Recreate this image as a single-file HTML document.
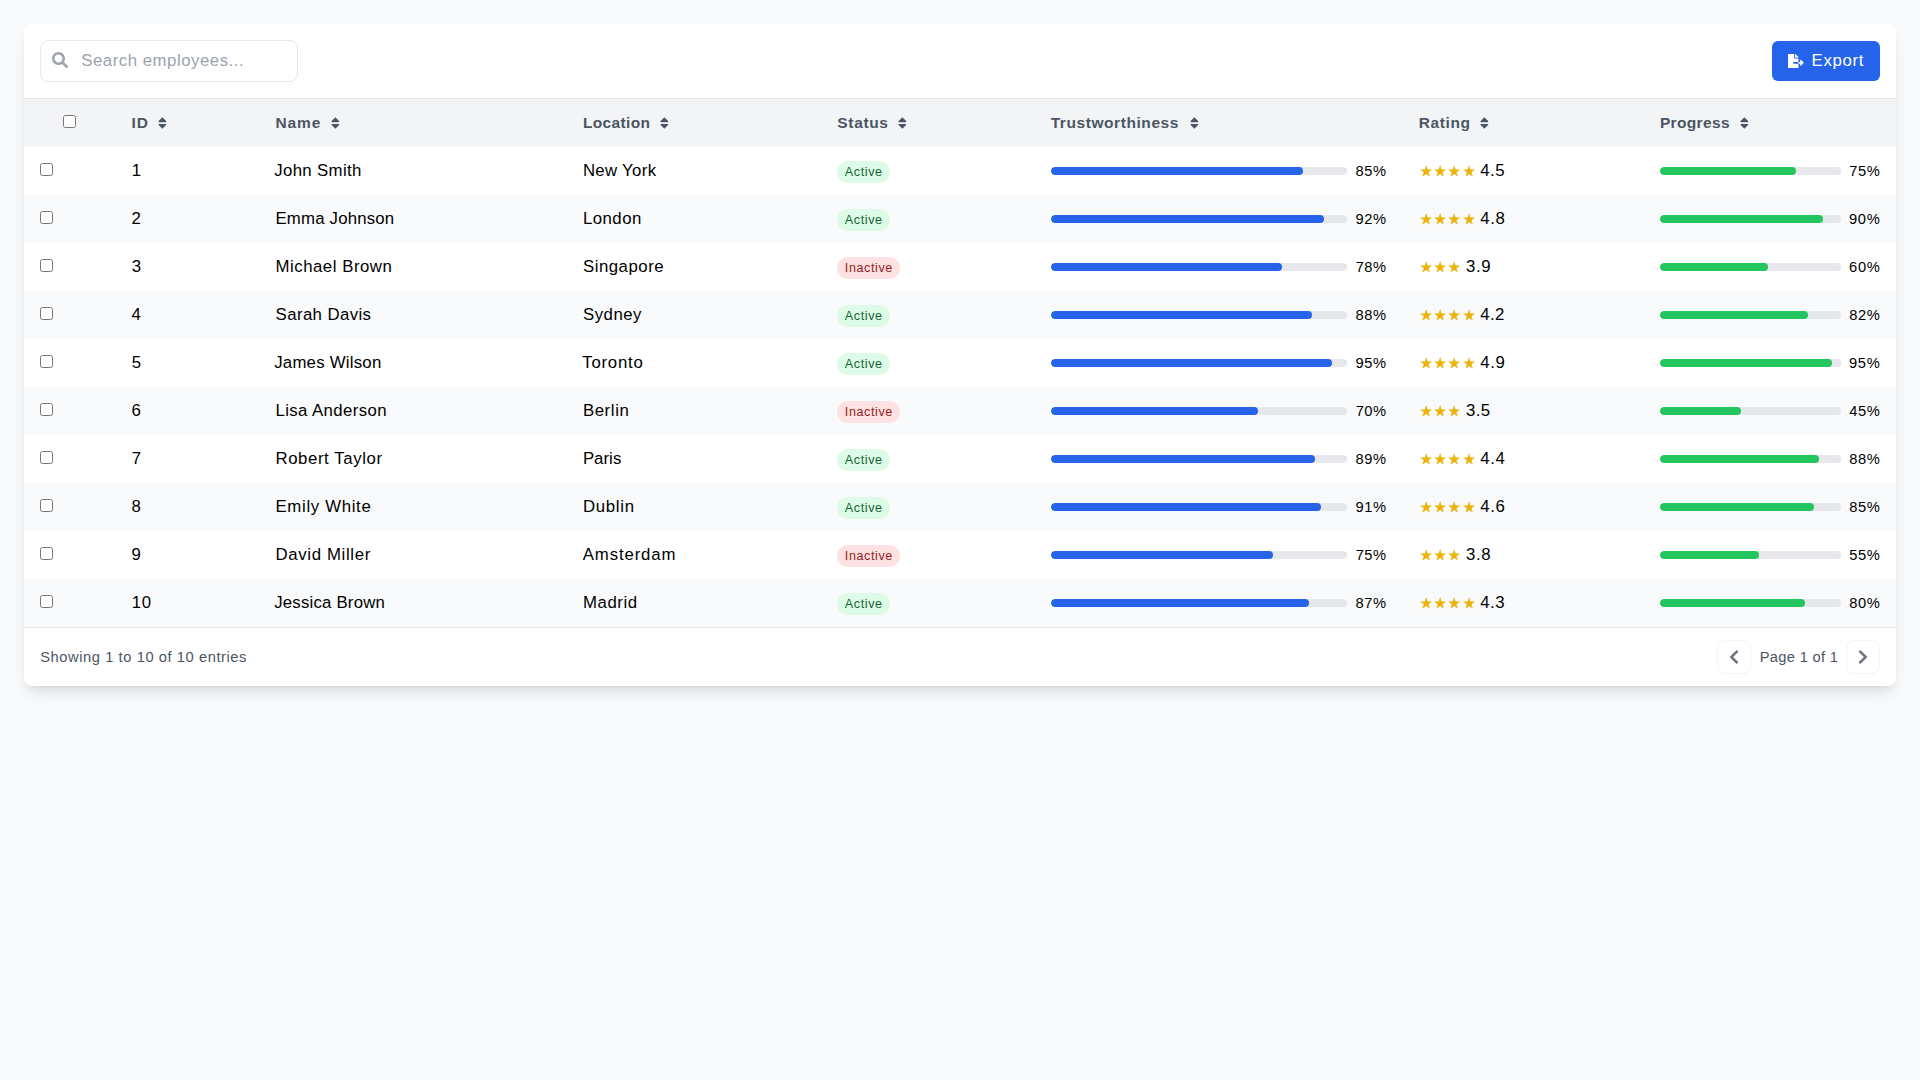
<!DOCTYPE html>
<html><head><meta charset="utf-8"><title>Employees</title><style>
*{box-sizing:border-box}
html,body{margin:0;padding:0}
body{width:1920px;height:1080px;background:#f9fafb;position:relative;overflow:hidden;font-family:"Liberation Sans",sans-serif}
.t{position:absolute;white-space:nowrap;line-height:20px}
.ic{position:absolute;overflow:visible}
.card{position:absolute;left:24px;top:24px;width:1872px;height:662px;background:#fff;border-radius:8px;box-shadow:0 10px 15px -3px rgba(0,0,0,.1),0 4px 6px -4px rgba(0,0,0,.1)}
.search{position:absolute;left:40px;top:40px;width:258px;height:42px;border:1px solid #e5e7eb;border-radius:8px;background:#fff}
.export{position:absolute;left:1772px;top:41px;width:108px;height:40px;background:#2563eb;border-radius:6px}
.hline{position:absolute;left:24px;width:1872px;height:1px;background:#e5e7eb}
.row{position:absolute;left:24px;width:1872px;height:48px}
.cb{position:absolute;margin:0;width:13px;height:13px}
.badge{position:absolute;height:22px;border-radius:11px}
.bar{position:absolute;height:8px;border-radius:4px;background:#e5e7eb;overflow:hidden}
.bar>div{height:8px;border-radius:4px}
.pbtn{position:absolute;top:640px;width:34px;height:34px;border:1px solid #f3f4f6;border-radius:8px;background:#fff}
</style></head><body>
<div class="card"></div>
<div class="search"></div>
<svg class="ic" style="left:52.20px;top:52.20px;width:16.00px;height:16.00px" viewBox="0 0 512 512"><path fill="#9ca3af" d="M505 442.7L405.3 343c-4.5-4.5-10.6-7-17-7H372c27.6-35.3 44-79.7 44-128C416 93.1 322.9 0 208 0S0 93.1 0 208s93.1 208 208 208c48.3 0 92.7-16.4 128-44v16.3c0 6.4 2.5 12.5 7 17l99.7 99.7c9.4 9.4 24.6 9.4 33.9 0l28.3-28.3c9.4-9.4 9.4-24.6.1-34zM208 336c-70.7 0-128-57.2-128-128 0-70.7 57.2-128 128-128 70.7 0 128 57.2 128 128 0 70.7-57.2 128-128 128z"/></svg>
<span class="t" style="left:81.29px;top:51.00px;font-size:16.8px;font-weight:400;letter-spacing:0.519px;color:#9ca3af;">Search employees...</span>
<div class="export"></div>
<svg class="ic" style="left:1788.00px;top:54.00px;width:15.75px;height:14.00px" viewBox="0 0 576 512"><path fill="#fff" d="M384 121.9c0-6.3-2.5-12.4-7-16.9L279.1 7c-4.5-4.5-10.6-7-17-7H256v128h128zM571 308l-95.7-96.4c-10.1-10.1-27.4-3-27.4 11.3V288h-64v64h64v65.2c0 14.3 17.3 21.4 27.4 11.3L571 332c6.6-6.6 6.6-17.4 0-24zm-379 28v-32c0-8.8 7.2-16 16-16h176V160H248c-13.2 0-24-10.8-24-24V0H24C10.7 0 0 10.7 0 24v464c0 13.3 10.7 24 24 24h336c13.3 0 24-10.7 24-24V352H208c-8.8 0-16-7.2-16-16z"/></svg>
<span class="t" style="left:1811.59px;top:51.00px;font-size:16.8px;font-weight:400;letter-spacing:0.674px;color:#fff;">Export</span>
<div class="hline" style="top:98px"></div>
<div class="row" style="top:99px;background:#f3f4f6"></div>
<input type="checkbox" class="cb" style="left:63px;top:115px">
<span class="t" style="left:131.45px;top:113.00px;font-size:15.5px;font-weight:700;letter-spacing:1.001px;color:#4b5563;">ID</span>
<svg class="ic" style="left:158.40px;top:115.84px;width:8.75px;height:14.00px" viewBox="0 0 320 512"><path fill="#4b5563" d="M41 288h238c21.4 0 32.1 25.9 17 41L177 448c-9.4 9.4-24.6 9.4-33.9 0L24 329c-15.1-15.1-4.4-41 17-41zm255-105L177 64c-9.4-9.4-24.6-9.4-33.9 0L24 183c-15.1 15.1-4.4 41 17 41h238c21.4 0 32.1-25.9 17-41z"/></svg>
<span class="t" style="left:275.55px;top:113.00px;font-size:15.5px;font-weight:700;letter-spacing:0.878px;color:#4b5563;">Name</span>
<svg class="ic" style="left:330.92px;top:115.84px;width:8.75px;height:14.00px" viewBox="0 0 320 512"><path fill="#4b5563" d="M41 288h238c21.4 0 32.1 25.9 17 41L177 448c-9.4 9.4-24.6 9.4-33.9 0L24 329c-15.1-15.1-4.4-41 17-41zm255-105L177 64c-9.4-9.4-24.6-9.4-33.9 0L24 183c-15.1 15.1-4.4 41 17 41h238c21.4 0 32.1-25.9 17-41z"/></svg>
<span class="t" style="left:582.95px;top:113.00px;font-size:15.5px;font-weight:700;letter-spacing:0.343px;color:#4b5563;">Location</span>
<svg class="ic" style="left:660.43px;top:115.84px;width:8.75px;height:14.00px" viewBox="0 0 320 512"><path fill="#4b5563" d="M41 288h238c21.4 0 32.1 25.9 17 41L177 448c-9.4 9.4-24.6 9.4-33.9 0L24 329c-15.1-15.1-4.4-41 17-41zm255-105L177 64c-9.4-9.4-24.6-9.4-33.9 0L24 183c-15.1 15.1-4.4 41 17 41h238c21.4 0 32.1-25.9 17-41z"/></svg>
<span class="t" style="left:837.36px;top:113.00px;font-size:15.5px;font-weight:700;letter-spacing:0.652px;color:#4b5563;">Status</span>
<svg class="ic" style="left:898.38px;top:115.84px;width:8.75px;height:14.00px" viewBox="0 0 320 512"><path fill="#4b5563" d="M41 288h238c21.4 0 32.1 25.9 17 41L177 448c-9.4 9.4-24.6 9.4-33.9 0L24 329c-15.1-15.1-4.4-41 17-41zm255-105L177 64c-9.4-9.4-24.6-9.4-33.9 0L24 183c-15.1 15.1-4.4 41 17 41h238c21.4 0 32.1-25.9 17-41z"/></svg>
<span class="t" style="left:1050.69px;top:113.00px;font-size:15.5px;font-weight:700;letter-spacing:0.571px;color:#4b5563;">Trustworthiness</span>
<svg class="ic" style="left:1189.66px;top:115.84px;width:8.75px;height:14.00px" viewBox="0 0 320 512"><path fill="#4b5563" d="M41 288h238c21.4 0 32.1 25.9 17 41L177 448c-9.4 9.4-24.6 9.4-33.9 0L24 329c-15.1-15.1-4.4-41 17-41zm255-105L177 64c-9.4-9.4-24.6-9.4-33.9 0L24 183c-15.1 15.1-4.4 41 17 41h238c21.4 0 32.1-25.9 17-41z"/></svg>
<span class="t" style="left:1418.65px;top:113.00px;font-size:15.5px;font-weight:700;letter-spacing:0.620px;color:#4b5563;">Rating</span>
<svg class="ic" style="left:1480.48px;top:115.84px;width:8.75px;height:14.00px" viewBox="0 0 320 512"><path fill="#4b5563" d="M41 288h238c21.4 0 32.1 25.9 17 41L177 448c-9.4 9.4-24.6 9.4-33.9 0L24 329c-15.1-15.1-4.4-41 17-41zm255-105L177 64c-9.4-9.4-24.6-9.4-33.9 0L24 183c-15.1 15.1-4.4 41 17 41h238c21.4 0 32.1-25.9 17-41z"/></svg>
<span class="t" style="left:1659.95px;top:113.00px;font-size:15.5px;font-weight:700;letter-spacing:0.342px;color:#4b5563;">Progress</span>
<svg class="ic" style="left:1739.94px;top:115.84px;width:8.75px;height:14.00px" viewBox="0 0 320 512"><path fill="#4b5563" d="M41 288h238c21.4 0 32.1 25.9 17 41L177 448c-9.4 9.4-24.6 9.4-33.9 0L24 329c-15.1-15.1-4.4-41 17-41zm255-105L177 64c-9.4-9.4-24.6-9.4-33.9 0L24 183c-15.1 15.1-4.4 41 17 41h238c21.4 0 32.1-25.9 17-41z"/></svg>
<div class="row" style="top:147px;background:#ffffff"></div>
<input type="checkbox" class="cb" style="left:40px;top:163px">
<span class="t" style="left:131.68px;top:161.00px;font-size:16.8px;font-weight:400;letter-spacing:0.000px;color:#000;">1</span>
<span class="t" style="left:274.21px;top:161.00px;font-size:16.8px;font-weight:400;letter-spacing:0.362px;color:#000;">John Smith</span>
<span class="t" style="left:582.89px;top:161.00px;font-size:16.8px;font-weight:400;letter-spacing:0.330px;color:#000;">New York</span>
<div class="badge" style="left:836.80px;top:161px;width:53.33px;background:#dcfce7"></div>
<span class="t" style="left:844.87px;top:162.00px;font-size:12.6px;font-weight:400;letter-spacing:0.574px;color:#166534;">Active</span>
<div class="bar" style="left:1050.80px;top:167px;width:296.48px"><div style="width:85%;background:#2563eb"></div></div>
<span class="t" style="left:1355.59px;top:161.00px;font-size:14.7px;font-weight:400;letter-spacing:0.568px;color:#000;">85%</span>
<svg class="ic" style="left:1419.64px;top:164.53px;width:12.27px;height:11.64px" viewBox="133 -1481 1570 1490"><path fill="#eab308" transform="scale(1,-1)" d="M133 912H732L918 1481L1105 912H1703L1219 559L1405 -9L918 343L432 -9L617 559Z"/></svg>
<svg class="ic" style="left:1433.98px;top:164.53px;width:12.27px;height:11.64px" viewBox="133 -1481 1570 1490"><path fill="#eab308" transform="scale(1,-1)" d="M133 912H732L918 1481L1105 912H1703L1219 559L1405 -9L918 343L432 -9L617 559Z"/></svg>
<svg class="ic" style="left:1448.32px;top:164.53px;width:12.27px;height:11.64px" viewBox="133 -1481 1570 1490"><path fill="#eab308" transform="scale(1,-1)" d="M133 912H732L918 1481L1105 912H1703L1219 559L1405 -9L918 343L432 -9L617 559Z"/></svg>
<svg class="ic" style="left:1462.66px;top:164.53px;width:12.27px;height:11.64px" viewBox="133 -1481 1570 1490"><path fill="#eab308" transform="scale(1,-1)" d="M133 912H732L918 1481L1105 912H1703L1219 559L1405 -9L918 343L432 -9L617 559Z"/></svg>
<span class="t" style="left:1480.16px;top:161.00px;font-size:16.8px;font-weight:400;letter-spacing:0.501px;color:#000;">4.5</span>
<div class="bar" style="left:1659.70px;top:167px;width:181.18px"><div style="width:75%;background:#22c55e"></div></div>
<span class="t" style="left:1849.28px;top:161.00px;font-size:14.7px;font-weight:400;letter-spacing:0.526px;color:#000;">75%</span>
<div class="row" style="top:195px;background:#f9fafb"></div>
<input type="checkbox" class="cb" style="left:40px;top:211px">
<span class="t" style="left:131.53px;top:209.00px;font-size:16.8px;font-weight:400;letter-spacing:0.000px;color:#000;">2</span>
<span class="t" style="left:275.49px;top:209.00px;font-size:16.8px;font-weight:400;letter-spacing:0.186px;color:#000;">Emma Johnson</span>
<span class="t" style="left:582.89px;top:209.00px;font-size:16.8px;font-weight:400;letter-spacing:0.482px;color:#000;">London</span>
<div class="badge" style="left:836.80px;top:209px;width:53.33px;background:#dcfce7"></div>
<span class="t" style="left:844.87px;top:210.00px;font-size:12.6px;font-weight:400;letter-spacing:0.574px;color:#166534;">Active</span>
<div class="bar" style="left:1050.80px;top:215px;width:296.48px"><div style="width:92%;background:#2563eb"></div></div>
<span class="t" style="left:1355.48px;top:209.00px;font-size:14.7px;font-weight:400;letter-spacing:0.627px;color:#000;">92%</span>
<svg class="ic" style="left:1419.64px;top:212.53px;width:12.27px;height:11.64px" viewBox="133 -1481 1570 1490"><path fill="#eab308" transform="scale(1,-1)" d="M133 912H732L918 1481L1105 912H1703L1219 559L1405 -9L918 343L432 -9L617 559Z"/></svg>
<svg class="ic" style="left:1433.98px;top:212.53px;width:12.27px;height:11.64px" viewBox="133 -1481 1570 1490"><path fill="#eab308" transform="scale(1,-1)" d="M133 912H732L918 1481L1105 912H1703L1219 559L1405 -9L918 343L432 -9L617 559Z"/></svg>
<svg class="ic" style="left:1448.32px;top:212.53px;width:12.27px;height:11.64px" viewBox="133 -1481 1570 1490"><path fill="#eab308" transform="scale(1,-1)" d="M133 912H732L918 1481L1105 912H1703L1219 559L1405 -9L918 343L432 -9L617 559Z"/></svg>
<svg class="ic" style="left:1462.66px;top:212.53px;width:12.27px;height:11.64px" viewBox="133 -1481 1570 1490"><path fill="#eab308" transform="scale(1,-1)" d="M133 912H732L918 1481L1105 912H1703L1219 559L1405 -9L918 343L432 -9L617 559Z"/></svg>
<span class="t" style="left:1480.16px;top:209.00px;font-size:16.8px;font-weight:400;letter-spacing:0.666px;color:#000;">4.8</span>
<div class="bar" style="left:1659.70px;top:215px;width:181.18px"><div style="width:90%;background:#22c55e"></div></div>
<span class="t" style="left:1849.08px;top:209.00px;font-size:14.7px;font-weight:400;letter-spacing:0.627px;color:#000;">90%</span>
<div class="row" style="top:243px;background:#ffffff"></div>
<input type="checkbox" class="cb" style="left:40px;top:259px">
<span class="t" style="left:131.78px;top:257.00px;font-size:16.8px;font-weight:400;letter-spacing:0.000px;color:#000;">3</span>
<span class="t" style="left:275.49px;top:257.00px;font-size:16.8px;font-weight:400;letter-spacing:0.525px;color:#000;">Michael Brown</span>
<span class="t" style="left:582.99px;top:257.00px;font-size:16.8px;font-weight:400;letter-spacing:0.510px;color:#000;">Singapore</span>
<div class="badge" style="left:836.80px;top:257px;width:63.62px;background:#fee2e2"></div>
<span class="t" style="left:844.81px;top:258.00px;font-size:12.6px;font-weight:400;letter-spacing:0.586px;color:#991b1b;">Inactive</span>
<div class="bar" style="left:1050.80px;top:263px;width:296.48px"><div style="width:78%;background:#2563eb"></div></div>
<span class="t" style="left:1355.68px;top:257.00px;font-size:14.7px;font-weight:400;letter-spacing:0.526px;color:#000;">78%</span>
<svg class="ic" style="left:1419.64px;top:260.53px;width:12.27px;height:11.64px" viewBox="133 -1481 1570 1490"><path fill="#eab308" transform="scale(1,-1)" d="M133 912H732L918 1481L1105 912H1703L1219 559L1405 -9L918 343L432 -9L617 559Z"/></svg>
<svg class="ic" style="left:1433.98px;top:260.53px;width:12.27px;height:11.64px" viewBox="133 -1481 1570 1490"><path fill="#eab308" transform="scale(1,-1)" d="M133 912H732L918 1481L1105 912H1703L1219 559L1405 -9L918 343L432 -9L617 559Z"/></svg>
<svg class="ic" style="left:1448.32px;top:260.53px;width:12.27px;height:11.64px" viewBox="133 -1481 1570 1490"><path fill="#eab308" transform="scale(1,-1)" d="M133 912H732L918 1481L1105 912H1703L1219 559L1405 -9L918 343L432 -9L617 559Z"/></svg>
<span class="t" style="left:1466.00px;top:257.00px;font-size:16.8px;font-weight:400;letter-spacing:0.591px;color:#000;">3.9</span>
<div class="bar" style="left:1659.70px;top:263px;width:181.18px"><div style="width:60%;background:#22c55e"></div></div>
<span class="t" style="left:1849.11px;top:257.00px;font-size:14.7px;font-weight:400;letter-spacing:0.608px;color:#000;">60%</span>
<div class="row" style="top:291px;background:#f9fafb"></div>
<input type="checkbox" class="cb" style="left:40px;top:307px">
<span class="t" style="left:131.60px;top:305.00px;font-size:16.8px;font-weight:400;letter-spacing:0.000px;color:#000;">4</span>
<span class="t" style="left:275.59px;top:305.00px;font-size:16.8px;font-weight:400;letter-spacing:0.397px;color:#000;">Sarah Davis</span>
<span class="t" style="left:582.99px;top:305.00px;font-size:16.8px;font-weight:400;letter-spacing:0.493px;color:#000;">Sydney</span>
<div class="badge" style="left:836.80px;top:305px;width:53.33px;background:#dcfce7"></div>
<span class="t" style="left:844.87px;top:306.00px;font-size:12.6px;font-weight:400;letter-spacing:0.574px;color:#166534;">Active</span>
<div class="bar" style="left:1050.80px;top:311px;width:296.48px"><div style="width:88%;background:#2563eb"></div></div>
<span class="t" style="left:1355.59px;top:305.00px;font-size:14.7px;font-weight:400;letter-spacing:0.568px;color:#000;">88%</span>
<svg class="ic" style="left:1419.64px;top:308.53px;width:12.27px;height:11.64px" viewBox="133 -1481 1570 1490"><path fill="#eab308" transform="scale(1,-1)" d="M133 912H732L918 1481L1105 912H1703L1219 559L1405 -9L918 343L432 -9L617 559Z"/></svg>
<svg class="ic" style="left:1433.98px;top:308.53px;width:12.27px;height:11.64px" viewBox="133 -1481 1570 1490"><path fill="#eab308" transform="scale(1,-1)" d="M133 912H732L918 1481L1105 912H1703L1219 559L1405 -9L918 343L432 -9L617 559Z"/></svg>
<svg class="ic" style="left:1448.32px;top:308.53px;width:12.27px;height:11.64px" viewBox="133 -1481 1570 1490"><path fill="#eab308" transform="scale(1,-1)" d="M133 912H732L918 1481L1105 912H1703L1219 559L1405 -9L918 343L432 -9L617 559Z"/></svg>
<svg class="ic" style="left:1462.66px;top:308.53px;width:12.27px;height:11.64px" viewBox="133 -1481 1570 1490"><path fill="#eab308" transform="scale(1,-1)" d="M133 912H732L918 1481L1105 912H1703L1219 559L1405 -9L918 343L432 -9L617 559Z"/></svg>
<span class="t" style="left:1480.16px;top:305.00px;font-size:16.8px;font-weight:400;letter-spacing:0.469px;color:#000;">4.2</span>
<div class="bar" style="left:1659.70px;top:311px;width:181.18px"><div style="width:82%;background:#22c55e"></div></div>
<span class="t" style="left:1849.19px;top:305.00px;font-size:14.7px;font-weight:400;letter-spacing:0.568px;color:#000;">82%</span>
<div class="row" style="top:339px;background:#ffffff"></div>
<input type="checkbox" class="cb" style="left:40px;top:355px">
<span class="t" style="left:131.76px;top:353.00px;font-size:16.8px;font-weight:400;letter-spacing:0.000px;color:#000;">5</span>
<span class="t" style="left:274.21px;top:353.00px;font-size:16.8px;font-weight:400;letter-spacing:0.238px;color:#000;">James Wilson</span>
<span class="t" style="left:582.28px;top:353.00px;font-size:16.8px;font-weight:400;letter-spacing:0.748px;color:#000;">Toronto</span>
<div class="badge" style="left:836.80px;top:353px;width:53.33px;background:#dcfce7"></div>
<span class="t" style="left:844.87px;top:354.00px;font-size:12.6px;font-weight:400;letter-spacing:0.574px;color:#166534;">Active</span>
<div class="bar" style="left:1050.80px;top:359px;width:296.48px"><div style="width:95%;background:#2563eb"></div></div>
<span class="t" style="left:1355.48px;top:353.00px;font-size:14.7px;font-weight:400;letter-spacing:0.627px;color:#000;">95%</span>
<svg class="ic" style="left:1419.64px;top:356.53px;width:12.27px;height:11.64px" viewBox="133 -1481 1570 1490"><path fill="#eab308" transform="scale(1,-1)" d="M133 912H732L918 1481L1105 912H1703L1219 559L1405 -9L918 343L432 -9L617 559Z"/></svg>
<svg class="ic" style="left:1433.98px;top:356.53px;width:12.27px;height:11.64px" viewBox="133 -1481 1570 1490"><path fill="#eab308" transform="scale(1,-1)" d="M133 912H732L918 1481L1105 912H1703L1219 559L1405 -9L918 343L432 -9L617 559Z"/></svg>
<svg class="ic" style="left:1448.32px;top:356.53px;width:12.27px;height:11.64px" viewBox="133 -1481 1570 1490"><path fill="#eab308" transform="scale(1,-1)" d="M133 912H732L918 1481L1105 912H1703L1219 559L1405 -9L918 343L432 -9L617 559Z"/></svg>
<svg class="ic" style="left:1462.66px;top:356.53px;width:12.27px;height:11.64px" viewBox="133 -1481 1570 1490"><path fill="#eab308" transform="scale(1,-1)" d="M133 912H732L918 1481L1105 912H1703L1219 559L1405 -9L918 343L432 -9L617 559Z"/></svg>
<span class="t" style="left:1480.16px;top:353.00px;font-size:16.8px;font-weight:400;letter-spacing:0.683px;color:#000;">4.9</span>
<div class="bar" style="left:1659.70px;top:359px;width:181.18px"><div style="width:95%;background:#22c55e"></div></div>
<span class="t" style="left:1849.08px;top:353.00px;font-size:14.7px;font-weight:400;letter-spacing:0.627px;color:#000;">95%</span>
<div class="row" style="top:387px;background:#f9fafb"></div>
<input type="checkbox" class="cb" style="left:40px;top:403px">
<span class="t" style="left:131.46px;top:401.00px;font-size:16.8px;font-weight:400;letter-spacing:0.000px;color:#000;">6</span>
<span class="t" style="left:275.49px;top:401.00px;font-size:16.8px;font-weight:400;letter-spacing:0.388px;color:#000;">Lisa Anderson</span>
<span class="t" style="left:582.89px;top:401.00px;font-size:16.8px;font-weight:400;letter-spacing:0.604px;color:#000;">Berlin</span>
<div class="badge" style="left:836.80px;top:401px;width:63.62px;background:#fee2e2"></div>
<span class="t" style="left:844.81px;top:402.00px;font-size:12.6px;font-weight:400;letter-spacing:0.586px;color:#991b1b;">Inactive</span>
<div class="bar" style="left:1050.80px;top:407px;width:296.48px"><div style="width:70%;background:#2563eb"></div></div>
<span class="t" style="left:1355.68px;top:401.00px;font-size:14.7px;font-weight:400;letter-spacing:0.526px;color:#000;">70%</span>
<svg class="ic" style="left:1419.64px;top:404.53px;width:12.27px;height:11.64px" viewBox="133 -1481 1570 1490"><path fill="#eab308" transform="scale(1,-1)" d="M133 912H732L918 1481L1105 912H1703L1219 559L1405 -9L918 343L432 -9L617 559Z"/></svg>
<svg class="ic" style="left:1433.98px;top:404.53px;width:12.27px;height:11.64px" viewBox="133 -1481 1570 1490"><path fill="#eab308" transform="scale(1,-1)" d="M133 912H732L918 1481L1105 912H1703L1219 559L1405 -9L918 343L432 -9L617 559Z"/></svg>
<svg class="ic" style="left:1448.32px;top:404.53px;width:12.27px;height:11.64px" viewBox="133 -1481 1570 1490"><path fill="#eab308" transform="scale(1,-1)" d="M133 912H732L918 1481L1105 912H1703L1219 559L1405 -9L918 343L432 -9L617 559Z"/></svg>
<span class="t" style="left:1466.00px;top:401.00px;font-size:16.8px;font-weight:400;letter-spacing:0.410px;color:#000;">3.5</span>
<div class="bar" style="left:1659.70px;top:407px;width:181.18px"><div style="width:45%;background:#22c55e"></div></div>
<span class="t" style="left:1849.23px;top:401.00px;font-size:14.7px;font-weight:400;letter-spacing:0.550px;color:#000;">45%</span>
<div class="row" style="top:435px;background:#ffffff"></div>
<input type="checkbox" class="cb" style="left:40px;top:451px">
<span class="t" style="left:131.65px;top:449.00px;font-size:16.8px;font-weight:400;letter-spacing:0.000px;color:#000;">7</span>
<span class="t" style="left:275.49px;top:449.00px;font-size:16.8px;font-weight:400;letter-spacing:0.585px;color:#000;">Robert Taylor</span>
<span class="t" style="left:582.89px;top:449.00px;font-size:16.8px;font-weight:400;letter-spacing:0.043px;color:#000;">Paris</span>
<div class="badge" style="left:836.80px;top:449px;width:53.33px;background:#dcfce7"></div>
<span class="t" style="left:844.87px;top:450.00px;font-size:12.6px;font-weight:400;letter-spacing:0.574px;color:#166534;">Active</span>
<div class="bar" style="left:1050.80px;top:455px;width:296.48px"><div style="width:89%;background:#2563eb"></div></div>
<span class="t" style="left:1355.59px;top:449.00px;font-size:14.7px;font-weight:400;letter-spacing:0.568px;color:#000;">89%</span>
<svg class="ic" style="left:1419.64px;top:452.53px;width:12.27px;height:11.64px" viewBox="133 -1481 1570 1490"><path fill="#eab308" transform="scale(1,-1)" d="M133 912H732L918 1481L1105 912H1703L1219 559L1405 -9L918 343L432 -9L617 559Z"/></svg>
<svg class="ic" style="left:1433.98px;top:452.53px;width:12.27px;height:11.64px" viewBox="133 -1481 1570 1490"><path fill="#eab308" transform="scale(1,-1)" d="M133 912H732L918 1481L1105 912H1703L1219 559L1405 -9L918 343L432 -9L617 559Z"/></svg>
<svg class="ic" style="left:1448.32px;top:452.53px;width:12.27px;height:11.64px" viewBox="133 -1481 1570 1490"><path fill="#eab308" transform="scale(1,-1)" d="M133 912H732L918 1481L1105 912H1703L1219 559L1405 -9L918 343L432 -9L617 559Z"/></svg>
<svg class="ic" style="left:1462.66px;top:452.53px;width:12.27px;height:11.64px" viewBox="133 -1481 1570 1490"><path fill="#eab308" transform="scale(1,-1)" d="M133 912H732L918 1481L1105 912H1703L1219 559L1405 -9L918 343L432 -9L617 559Z"/></svg>
<span class="t" style="left:1480.16px;top:449.00px;font-size:16.8px;font-weight:400;letter-spacing:0.645px;color:#000;">4.4</span>
<div class="bar" style="left:1659.70px;top:455px;width:181.18px"><div style="width:88%;background:#22c55e"></div></div>
<span class="t" style="left:1849.19px;top:449.00px;font-size:14.7px;font-weight:400;letter-spacing:0.568px;color:#000;">88%</span>
<div class="row" style="top:483px;background:#f9fafb"></div>
<input type="checkbox" class="cb" style="left:40px;top:499px">
<span class="t" style="left:131.56px;top:497.00px;font-size:16.8px;font-weight:400;letter-spacing:0.000px;color:#000;">8</span>
<span class="t" style="left:275.49px;top:497.00px;font-size:16.8px;font-weight:400;letter-spacing:0.669px;color:#000;">Emily White</span>
<span class="t" style="left:582.89px;top:497.00px;font-size:16.8px;font-weight:400;letter-spacing:0.712px;color:#000;">Dublin</span>
<div class="badge" style="left:836.80px;top:497px;width:53.33px;background:#dcfce7"></div>
<span class="t" style="left:844.87px;top:498.00px;font-size:12.6px;font-weight:400;letter-spacing:0.574px;color:#166534;">Active</span>
<div class="bar" style="left:1050.80px;top:503px;width:296.48px"><div style="width:91%;background:#2563eb"></div></div>
<span class="t" style="left:1355.48px;top:497.00px;font-size:14.7px;font-weight:400;letter-spacing:0.627px;color:#000;">91%</span>
<svg class="ic" style="left:1419.64px;top:500.53px;width:12.27px;height:11.64px" viewBox="133 -1481 1570 1490"><path fill="#eab308" transform="scale(1,-1)" d="M133 912H732L918 1481L1105 912H1703L1219 559L1405 -9L918 343L432 -9L617 559Z"/></svg>
<svg class="ic" style="left:1433.98px;top:500.53px;width:12.27px;height:11.64px" viewBox="133 -1481 1570 1490"><path fill="#eab308" transform="scale(1,-1)" d="M133 912H732L918 1481L1105 912H1703L1219 559L1405 -9L918 343L432 -9L617 559Z"/></svg>
<svg class="ic" style="left:1448.32px;top:500.53px;width:12.27px;height:11.64px" viewBox="133 -1481 1570 1490"><path fill="#eab308" transform="scale(1,-1)" d="M133 912H732L918 1481L1105 912H1703L1219 559L1405 -9L918 343L432 -9L617 559Z"/></svg>
<svg class="ic" style="left:1462.66px;top:500.53px;width:12.27px;height:11.64px" viewBox="133 -1481 1570 1490"><path fill="#eab308" transform="scale(1,-1)" d="M133 912H732L918 1481L1105 912H1703L1219 559L1405 -9L918 343L432 -9L617 559Z"/></svg>
<span class="t" style="left:1480.16px;top:497.00px;font-size:16.8px;font-weight:400;letter-spacing:0.713px;color:#000;">4.6</span>
<div class="bar" style="left:1659.70px;top:503px;width:181.18px"><div style="width:85%;background:#22c55e"></div></div>
<span class="t" style="left:1849.19px;top:497.00px;font-size:14.7px;font-weight:400;letter-spacing:0.568px;color:#000;">85%</span>
<div class="row" style="top:531px;background:#ffffff"></div>
<input type="checkbox" class="cb" style="left:40px;top:547px">
<span class="t" style="left:131.42px;top:545.00px;font-size:16.8px;font-weight:400;letter-spacing:0.000px;color:#000;">9</span>
<span class="t" style="left:275.49px;top:545.00px;font-size:16.8px;font-weight:400;letter-spacing:0.653px;color:#000;">David Miller</span>
<span class="t" style="left:582.79px;top:545.00px;font-size:16.8px;font-weight:400;letter-spacing:0.860px;color:#000;">Amsterdam</span>
<div class="badge" style="left:836.80px;top:545px;width:63.62px;background:#fee2e2"></div>
<span class="t" style="left:844.81px;top:546.00px;font-size:12.6px;font-weight:400;letter-spacing:0.586px;color:#991b1b;">Inactive</span>
<div class="bar" style="left:1050.80px;top:551px;width:296.48px"><div style="width:75%;background:#2563eb"></div></div>
<span class="t" style="left:1355.68px;top:545.00px;font-size:14.7px;font-weight:400;letter-spacing:0.526px;color:#000;">75%</span>
<svg class="ic" style="left:1419.64px;top:548.53px;width:12.27px;height:11.64px" viewBox="133 -1481 1570 1490"><path fill="#eab308" transform="scale(1,-1)" d="M133 912H732L918 1481L1105 912H1703L1219 559L1405 -9L918 343L432 -9L617 559Z"/></svg>
<svg class="ic" style="left:1433.98px;top:548.53px;width:12.27px;height:11.64px" viewBox="133 -1481 1570 1490"><path fill="#eab308" transform="scale(1,-1)" d="M133 912H732L918 1481L1105 912H1703L1219 559L1405 -9L918 343L432 -9L617 559Z"/></svg>
<svg class="ic" style="left:1448.32px;top:548.53px;width:12.27px;height:11.64px" viewBox="133 -1481 1570 1490"><path fill="#eab308" transform="scale(1,-1)" d="M133 912H732L918 1481L1105 912H1703L1219 559L1405 -9L918 343L432 -9L617 559Z"/></svg>
<span class="t" style="left:1466.00px;top:545.00px;font-size:16.8px;font-weight:400;letter-spacing:0.574px;color:#000;">3.8</span>
<div class="bar" style="left:1659.70px;top:551px;width:181.18px"><div style="width:55%;background:#22c55e"></div></div>
<span class="t" style="left:1849.37px;top:545.00px;font-size:14.7px;font-weight:400;letter-spacing:0.478px;color:#000;">55%</span>
<div class="row" style="top:579px;background:#f9fafb"></div>
<input type="checkbox" class="cb" style="left:40px;top:595px">
<span class="t" style="left:131.68px;top:593.00px;font-size:16.8px;font-weight:400;letter-spacing:0.788px;color:#000;">10</span>
<span class="t" style="left:274.21px;top:593.00px;font-size:16.8px;font-weight:400;letter-spacing:0.204px;color:#000;">Jessica Brown</span>
<span class="t" style="left:582.89px;top:593.00px;font-size:16.8px;font-weight:400;letter-spacing:0.606px;color:#000;">Madrid</span>
<div class="badge" style="left:836.80px;top:593px;width:53.33px;background:#dcfce7"></div>
<span class="t" style="left:844.87px;top:594.00px;font-size:12.6px;font-weight:400;letter-spacing:0.574px;color:#166534;">Active</span>
<div class="bar" style="left:1050.80px;top:599px;width:296.48px"><div style="width:87%;background:#2563eb"></div></div>
<span class="t" style="left:1355.59px;top:593.00px;font-size:14.7px;font-weight:400;letter-spacing:0.568px;color:#000;">87%</span>
<svg class="ic" style="left:1419.64px;top:596.53px;width:12.27px;height:11.64px" viewBox="133 -1481 1570 1490"><path fill="#eab308" transform="scale(1,-1)" d="M133 912H732L918 1481L1105 912H1703L1219 559L1405 -9L918 343L432 -9L617 559Z"/></svg>
<svg class="ic" style="left:1433.98px;top:596.53px;width:12.27px;height:11.64px" viewBox="133 -1481 1570 1490"><path fill="#eab308" transform="scale(1,-1)" d="M133 912H732L918 1481L1105 912H1703L1219 559L1405 -9L918 343L432 -9L617 559Z"/></svg>
<svg class="ic" style="left:1448.32px;top:596.53px;width:12.27px;height:11.64px" viewBox="133 -1481 1570 1490"><path fill="#eab308" transform="scale(1,-1)" d="M133 912H732L918 1481L1105 912H1703L1219 559L1405 -9L918 343L432 -9L617 559Z"/></svg>
<svg class="ic" style="left:1462.66px;top:596.53px;width:12.27px;height:11.64px" viewBox="133 -1481 1570 1490"><path fill="#eab308" transform="scale(1,-1)" d="M133 912H732L918 1481L1105 912H1703L1219 559L1405 -9L918 343L432 -9L617 559Z"/></svg>
<span class="t" style="left:1480.16px;top:593.00px;font-size:16.8px;font-weight:400;letter-spacing:0.576px;color:#000;">4.3</span>
<div class="bar" style="left:1659.70px;top:599px;width:181.18px"><div style="width:80%;background:#22c55e"></div></div>
<span class="t" style="left:1849.19px;top:593.00px;font-size:14.7px;font-weight:400;letter-spacing:0.568px;color:#000;">80%</span>
<div class="hline" style="top:627px"></div>
<span class="t" style="left:40.26px;top:647.00px;font-size:14.7px;font-weight:400;letter-spacing:0.569px;color:#4b5563;">Showing 1 to 10 of 10 entries</span>
<div class="pbtn" style="left:1717px"></div>
<svg class="ic" style="left:1729.10px;top:648.80px;width:10.00px;height:16.00px" viewBox="0 0 320 512"><path fill="#6b7280" d="M34.52 239.03L228.87 44.69c9.37-9.37 24.57-9.37 33.94 0l22.67 22.67c9.36 9.36 9.37 24.52.04 33.9L131.49 256l154.02 154.75c9.34 9.38 9.32 24.54-.04 33.9l-22.67 22.67c-9.37 9.37-24.57 9.37-33.94 0L34.52 272.97c-9.37-9.37-9.37-24.57 0-33.94z"/></svg>
<span class="t" style="left:1759.67px;top:647.00px;font-size:14.7px;font-weight:400;letter-spacing:0.324px;color:#4b5563;">Page 1 of 1</span>
<div class="pbtn" style="left:1846px"></div>
<svg class="ic" style="left:1857.90px;top:648.80px;width:10.00px;height:16.00px" viewBox="0 0 320 512"><path fill="#6b7280" d="M285.476 272.971L91.132 467.314c-9.373 9.373-24.569 9.373-33.941 0l-22.667-22.667c-9.357-9.357-9.375-24.522-.04-33.901L188.505 256 34.484 101.255c-9.335-9.379-9.317-24.544.04-33.901l22.667-22.667c9.373-9.373 24.569-9.373 33.941 0L285.475 239.03c9.373 9.372 9.373 24.568.001 33.941z"/></svg>
</body></html>
